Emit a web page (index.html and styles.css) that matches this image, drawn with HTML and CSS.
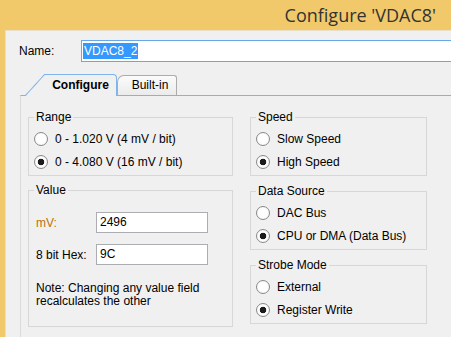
FILE: index.html
```html
<!DOCTYPE html>
<html lang="en">
<head>
    <meta charset="UTF-8">
    <title>Configure 'VDAC8'</title>
    <link rel="stylesheet" href="styles.css">
</head>
<body>
    <div class="titlebar">Configure 'VDAC8'</div>
    <div class="frame">
        <div class="name-row">
            <label class="name-label">Name:</label>
            <div class="name-input"><span class="selected">VDAC8_2</span></div>
        </div>

        <div class="tabs">
            <div class="tab tab-active">Configure</div>
            <div class="tab tab-plain">Built-in</div>
        </div>

        <div class="panel">
            <div class="column">
                <fieldset class="group">
                    <legend>Range</legend>
                    <div class="options">
                        <label class="option"><span class="radio"></span>0 - 1.020 V (4 mV / bit)</label>
                        <label class="option"><span class="radio checked"></span>0 - 4.080 V (16 mV / bit)</label>
                    </div>
                </fieldset>
                <fieldset class="group">
                    <legend>Value</legend>
                    <div class="fields">
                        <div class="field-row">
                            <label class="field-label accent">mV:</label>
                            <div class="text-box">2496</div>
                        </div>
                        <div class="field-row">
                            <label class="field-label">8 bit Hex:</label>
                            <div class="text-box">9C</div>
                        </div>
                        <p class="note">Note: Changing any value field<br>recalculates the other</p>
                    </div>
                </fieldset>
            </div>

            <div class="column column-right">
                <fieldset class="group">
                    <legend>Speed</legend>
                    <div class="options">
                        <label class="option"><span class="radio"></span>Slow Speed</label>
                        <label class="option"><span class="radio checked"></span>High Speed</label>
                    </div>
                </fieldset>
                <fieldset class="group">
                    <legend>Data Source</legend>
                    <div class="options">
                        <label class="option"><span class="radio"></span>DAC Bus</label>
                        <label class="option"><span class="radio checked"></span>CPU or DMA (Data Bus)</label>
                    </div>
                </fieldset>
                <fieldset class="group">
                    <legend>Strobe Mode</legend>
                    <div class="options">
                        <label class="option"><span class="radio"></span>External</label>
                        <label class="option"><span class="radio checked"></span>Register Write</label>
                    </div>
                </fieldset>
            </div>
        </div>
    </div>
</body>
</html>
```

FILE: styles.css
```css
html, body {
    margin: 0;
    height: 100%;
    overflow: hidden;
}
body {
    background: #f1c96b;
    font-family: "Liberation Sans", Arial, sans-serif;
    font-size: 12px;
    color: #000;
}
.titlebar {
    height: 30px;
    line-height: 30px;
    text-align: right;
    padding-right: 15px;
    font-family: "Open Sans", "Liberation Sans", sans-serif;
    font-size: 18px;
    color: #333;
}
.frame {
    margin-left: 5px;
    height: 307px;
    box-sizing: border-box;
    border-left: 1px solid #e9dfc8;
    border-top: 1px solid #e9dfc8;
    background: #f0f0f0;
    overflow: hidden;
}
.name-row {
    display: flex;
    align-items: center;
    margin-top: 9px;
    padding-left: 13px;
}
.name-label {
    width: 62px;
}
.name-input {
    flex: 1;
    margin-right: -20px;
    height: 22px;
    box-sizing: border-box;
    border: 1px solid #69a8e8;
    background: #fff;
    padding: 2px 1px;
    line-height: 16px;
}
.selected {
    display: inline-block;
    background: #3399ff;
    color: #fff;
    padding: 0 1px;
}
.tabs {
    display: flex;
    align-items: flex-end;
    height: 21px;
    margin: 12px 0 0 14px;
    padding-left: 25px;
}
.tab {
    box-sizing: border-box;
    text-align: center;
}
.tab-active {
    position: relative;
    z-index: 2;
    width: 72px;
    height: 22px;
    margin-bottom: -1px;
    border-top: 1px solid #7eb4ea;
    border-right: 1px solid #7eb4ea;
    border-top-right-radius: 4px;
    background: #f0f0f0;
    font-weight: bold;
    line-height: 20px;
}
.tab-active::before {
    content: "";
    position: absolute;
    left: -20px;
    top: -1px;
    width: 20px;
    height: 22px;
    background: linear-gradient(to bottom right, transparent calc(50% - 1px), #7eb4ea 50%, #f0f0f0 calc(50% + 1px));
}
.tab-plain {
    width: 60px;
    height: 20px;
    padding-left: 6px;
    border: 1px solid #acacac;
    border-bottom: none;
    border-top-left-radius: 7px;
    border-top-right-radius: 3px;
    background: linear-gradient(#fbfbfb, #ebebeb);
    line-height: 19px;
}
.panel {
    display: grid;
    grid-template-columns: 205px 177px;
    column-gap: 17px;
    align-items: start;
    margin-left: 14px;
    margin-right: -20px;
    height: 260px;
    padding: 14px 0 0 7px;
    border-top: 1px solid #7eb4ea;
    border-left: 1px solid #dadada;
}
.column {
    display: flex;
    flex-direction: column;
    gap: 7px;
}
.column-right {
    gap: 8px;
}
.group {
    margin: 0;
    padding: 0 0 0 5px;
    min-width: 0;
    border: 1px solid #d7d7d7;
}
.group legend {
    padding: 0 2px;
    line-height: 14px;
}
.options {
    padding: 3px 0 2px;
}
.option {
    display: flex;
    align-items: center;
    gap: 7px;
    height: 23px;
}
.radio {
    width: 14px;
    height: 14px;
    box-sizing: border-box;
    border: 1px solid #8a8a8a;
    border-radius: 50%;
    background: radial-gradient(circle, #fff 0 4px, #f2f2f2 7px);
}
.radio.checked {
    background: radial-gradient(circle, #1c1c1c 0 3px, #fff 3.6px, #fff 4px, #f2f2f2 7px);
}
.fields {
    padding: 15px 0 18px 2px;
}
.field-row {
    display: flex;
    align-items: center;
    margin-bottom: 11px;
}
.field-label {
    width: 60px;
}
.accent {
    color: #b8730a;
}
.text-box {
    width: 112px;
    height: 21px;
    box-sizing: border-box;
    border: 1px solid #abadb3;
    background: #fff;
    padding: 0 3px;
    line-height: 19px;
}
.note {
    margin: 17px 0 0;
    line-height: 13px;
}
```
